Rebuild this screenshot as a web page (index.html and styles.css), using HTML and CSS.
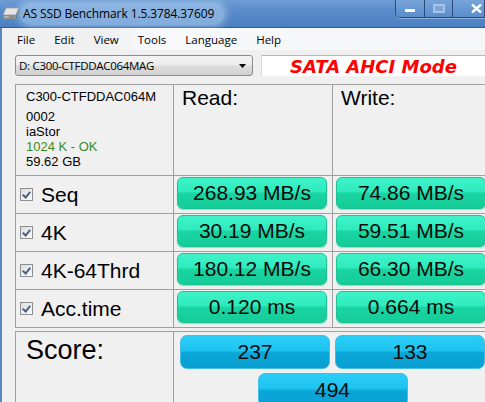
FILE: index.html
```html
<!DOCTYPE html>
<html>
<head>
<meta charset="utf-8">
<link rel="stylesheet" href="styles.css">
</head>
<body>
<div class="window">
  <div class="titlebar">
    <svg class="appicon" width="18" height="14" viewBox="0 0 18 14">
      <polygon points="4,1 17,1 14,8 1,8" fill="#e6e6e6" stroke="#9a9a9a" stroke-width="0.8"/>
      <polygon points="1,8 14,8 14,12 1,12" fill="#8c8c8c"/>
      <polygon points="14,8 17,1 17,5 14,12" fill="#6e6e6e"/>
      <rect x="2" y="9.5" width="5" height="1" fill="#cfcfcf"/>
    </svg>
    <span class="title">AS SSD Benchmark 1.5.3784.37609</span>
    <div class="winbtns">
      <div class="wbtn"><span class="ic-min"></span></div>
      <div class="wbtn"><span class="ic-max"></span></div>
      <div class="wbtn close">
        <svg width="11" height="9" viewBox="0 0 11 9"><path d="M1 0.5 L10 8.5 M10 0.5 L1 8.5" stroke="#ffffff" stroke-width="2.4"/></svg>
      </div>
    </div>
  </div>
  <div class="client">
    <div class="menubar">
      <span>File</span><span>Edit</span><span>View</span><span>Tools</span><span>Language</span><span>Help</span>
    </div>
    <div class="toolbar">
      <div class="combo">
        <span>D: C300-CTFDDAC064MAG</span>
        <svg width="7" height="4" viewBox="0 0 7 4"><polygon points="0,0 7,0 3.5,4" fill="#000"/></svg>
      </div>
      <div class="mode">SATA AHCI Mode</div>
    </div>
    <div class="grid">
      <div class="cell info">
        <div class="model">C300-CTFDDAC064M</div>
        <div class="details">
          <div>0002</div>
          <div>iaStor</div>
          <div class="ok">1024 K - OK</div>
          <div>59.62 GB</div>
        </div>
      </div>
      <div class="cell head">Read:</div>
      <div class="cell head">Write:</div>

      <div class="cell label"><span class="chk"></span>Seq</div>
      <div class="cell val"><div class="gbox">268.93 MB/s</div></div>
      <div class="cell val"><div class="gbox">74.86 MB/s</div></div>

      <div class="cell label"><span class="chk"></span>4K</div>
      <div class="cell val"><div class="gbox">30.19 MB/s</div></div>
      <div class="cell val"><div class="gbox">59.51 MB/s</div></div>

      <div class="cell label"><span class="chk"></span>4K-64Thrd</div>
      <div class="cell val"><div class="gbox">180.12 MB/s</div></div>
      <div class="cell val"><div class="gbox">66.30 MB/s</div></div>

      <div class="cell label"><span class="chk"></span>Acc.time</div>
      <div class="cell val"><div class="gbox">0.120 ms</div></div>
      <div class="cell val"><div class="gbox">0.664 ms</div></div>
    </div>
    <div class="score">
      <div class="score-label">Score:</div>
      <div class="score-vals">
        <div class="bbox">237</div>
        <div class="bbox">133</div>
        <div class="bbox total">494</div>
      </div>
    </div>
  </div>
</div>
</body>
</html>
```
FILE: styles.css
```css
* { box-sizing: border-box; }
html, body { margin: 0; padding: 0; }
body {
  width: 485px;
  height: 402px;
  overflow: hidden;
  background: #f0f0f0;
  font-family: "Liberation Sans", Arial, sans-serif;
  color: #000;
}
.window {
  width: 485px;
  height: 402px;
  display: flex;
  flex-direction: column;
}

/* Title bar */
.titlebar {
  height: 28px;
  flex: none;
  display: flex;
  align-items: flex-start;
  background: linear-gradient(to bottom, #6d9dd4 0%, #5a8ccb 40%, #4b80c1 100%);
  border-bottom: 1px solid #2d5a92;
}
.appicon { margin: 7px 0 0 2px; flex: none; }
.title {
  margin: 3px 0 0 0;
  padding: 2px 10px 3px 3px;
  font: 12px "Open Sans", "Noto Sans", sans-serif;
  color: #000;
  border-radius: 12px;
  background: rgba(175, 208, 240, 0.55);
  box-shadow: 0 0 6px 3px rgba(175, 208, 240, 0.5);
  letter-spacing: -0.1px;
}
.winbtns {
  margin-left: auto;
  display: flex;
  height: 18px;
  border: 1px solid #2b4d7e;
  border-top: none;
  border-radius: 0 0 0 5px;
  overflow: hidden;
  box-shadow: 0 1px 0 rgba(255,255,255,0.35);
}
.wbtn {
  width: 28px;
  height: 17px;
  display: flex;
  align-items: center;
  justify-content: center;
  background: linear-gradient(to bottom, #76a4d9, #5b8dcb);
  border-left: 1px solid #2b4d7e;
}
.wbtn:first-child { border-left: none; }
.wbtn.close { width: 32px; justify-content: flex-start; padding-left: 18px; }
.ic-min {
  display: block;
  width: 10px;
  height: 3px;
  margin-top: 4px;
  background: #fff;
  box-shadow: 0 0 1px #4a6c99;
}
.ic-max {
  display: block;
  width: 12px;
  height: 9px;
  border: 2px solid #a9c5ea;
  background: #7ea6d8;
}

/* Client */
.client {
  flex: 1;
  border-left: 2px solid #5a86be;
  display: flex;
  flex-direction: column;
}
.menubar {
  height: 22px;
  flex: none;
  display: flex;
  align-items: center;
  gap: 19px;
  padding-left: 15px;
  font: 11.5px "Open Sans", "Noto Sans", sans-serif;
  background: linear-gradient(to right, #f0f0f0 0%, #f0f0f0 22%, #f7f8fa 30%, #f5f6f8 100%);
}
.toolbar {
  display: flex;
  margin: 5px 0 0 13px;
  gap: 8px;
  height: 21px;
}
.combo {
  width: 238px;
  height: 21px;
  border: 1px solid #8c8c8c;
  border-radius: 3px;
  background: linear-gradient(to bottom, #f3f3f3 0%, #ebebeb 48%, #dddddd 52%, #d0d0d0 100%);
  display: flex;
  align-items: center;
  justify-content: space-between;
  padding: 0 6px 0 3px;
  font: 11.5px "Open Sans", "Noto Sans", sans-serif;
  letter-spacing: -0.3px;
}
.mode {
  flex: 1;
  background: #fff;
  border-top: 1px solid #b8b8b8;
  border-left: 1px solid #d8d8d8;
  display: flex;
  align-items: center;
  justify-content: center;
  color: #ff0000;
  font: italic bold 18px "DejaVu Sans", Verdana, sans-serif;
}

/* Results grid */
.grid {
  margin: 8px 0 0 13px;
  display: grid;
  grid-template-columns: 157px 158px 160px;
  grid-template-rows: 90px 37px 37px 37px 37px;
  gap: 1px;
  background: #a0a0a0;
  border-left: 1px solid #a0a0a0;
  border-top: 1px solid #a0a0a0;
  border-bottom: 1px solid #a0a0a0;
  flex: none;
}
.cell { background: #f0f0f0; }
.info { padding: 4px 0 0 10px; font-size: 13px; line-height: 15px; }
.details { margin-top: 5px; }
.ok { color: #3a8a24; }
.head { padding: 1px 0 0 8px; font-size: 21px; line-height: 24px; }
.label {
  display: flex;
  align-items: center;
  padding-left: 4px;
  font-size: 21px;
}
.chk {
  width: 13px;
  height: 13px;
  margin-right: 8px;
  border: 1px solid #8e8f8f;
  background: linear-gradient(135deg, #dcdcdc, #fdfdfd);
  position: relative;
  flex: none;
}
.chk::after {
  content: "";
  position: absolute;
  left: 3px;
  top: 1px;
  width: 3px;
  height: 6px;
  border-right: 2px solid #4a5d8e;
  border-bottom: 2px solid #4a5d8e;
  transform: rotate(40deg);
}
.val { padding: 1px 0 0 3px; }
.gbox {
  width: 150px;
  height: 32px;
  border: 1px solid #1ec394;
  border-radius: 6px;
  background: linear-gradient(to bottom, #3ff3c8 0%, #2eebbd 45%, #1ad5a2 52%, #14cc98 100%);
  box-shadow: 0 1px 1px rgba(20, 200, 150, 0.45);
  display: flex;
  align-items: center;
  justify-content: center;
  font-size: 21px;
  color: #0a0a0a;
}

/* Score */
.score {
  margin: 3px 0 0 13px;
  flex: 1;
  display: grid;
  grid-template-columns: 157px 1fr;
  gap: 1px;
  background: #a0a0a0;
  border-left: 1px solid #a0a0a0;
  border-top: 1px solid #a0a0a0;
}
.score-label {
  background: #f0f0f0;
  padding: 2px 0 0 10px;
  font-size: 27px;
  line-height: 32px;
}
.score-vals {
  background: #f0f0f0;
  display: grid;
  grid-template-columns: 150px 150px;
  column-gap: 5px;
  row-gap: 4px;
  align-content: start;
  padding: 3px 0 0 6px;
}
.bbox {
  height: 34px;
  border: 1px solid #44bde8;
  border-radius: 7px;
  background: linear-gradient(to bottom, #2acdf6 0%, #1ec4f0 45%, #0ba7d8 52%, #089ed1 100%);
  display: flex;
  align-items: center;
  justify-content: center;
  font-size: 21px;
  color: #0a0a0a;
}
.bbox.total {
  grid-column: 1 / span 2;
  width: 150px;
  justify-self: center;
}
```
